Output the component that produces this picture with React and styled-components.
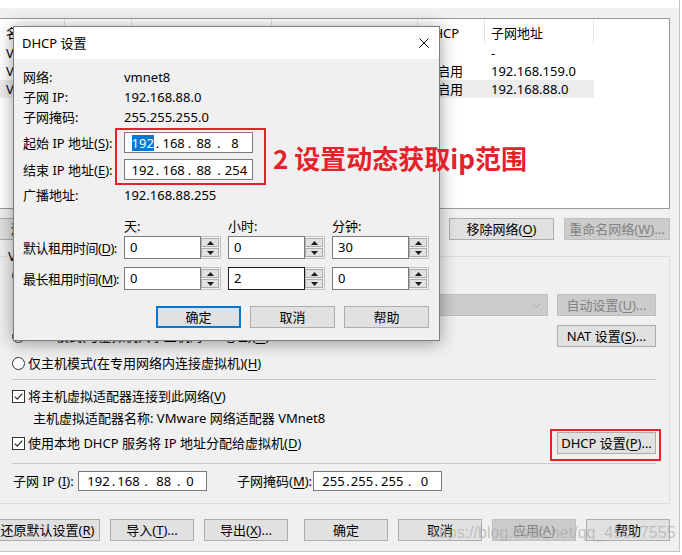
import React from "react";
import styled, { createGlobalStyle } from "styled-components";

const GlobalStyle = createGlobalStyle`
  html, body { margin: 0; padding: 0; background: #ffffff; }
  body {
    font-family: "Noto Sans", "Noto Sans CJK SC", sans-serif;
    font-size: 13px;
    color: #000;
    overflow: hidden;
  }
  u { text-underline-offset: 2px; }
`;

const Page = styled.div`
  position: relative;
  width: 682px;
  height: 555px;
  overflow: hidden;
  background: #ffffff;
`;

const Window = styled.div`
  margin-left: -3px;
  width: 683px;
  height: 552px;
  box-sizing: border-box;
  background: #f0f0f0;
  border-right: 1px solid #c4c4c4;
  border-bottom: 1px solid #c4c4c4;
  padding: 0 9px 0 0;
  display: flex;
  flex-direction: column;
`;

const TopStrip = styled.div`
  height: 8px;
  margin-right: -9px;
  background: #ffffff;
  flex: none;
`;

const List = styled.div`
  margin-top: 10px;
  height: 191px;
  box-sizing: border-box;
  border: 1px solid #9a9a9a;
  background: #ffffff;
  padding-left: 2px;
  flex: none;
  overflow: hidden;
`;

const cols = "65px 67px 140px 146px 67px 109px";

const ListHeader = styled.div`
  display: grid;
  grid-template-columns: ${cols};
  width: max-content;
  height: 25px;
`;

const HeaderCell = styled.div`
  display: flex;
  align-items: center;
  padding: 2px 0 0 6px;
  border-right: 1px solid #e5e5e5;
  white-space: nowrap;
  overflow: hidden;
`;

const ListRow = styled.div`
  display: grid;
  grid-template-columns: ${cols};
  width: max-content;
  height: 18px;
  background: ${(p) => (p.$sel ? "#ececec" : "transparent")};
`;

const Cell = styled.div`
  padding-left: 6px;
  line-height: 18px;
  white-space: nowrap;
  overflow: hidden;
`;

const Btn = styled.button`
  box-sizing: border-box;
  width: ${(p) => p.$w || 84}px;
  height: 22px;
  margin: 0;
  padding: 0;
  font: inherit;
  font-size: 13px;
  line-height: 18px;
  color: ${(p) => (p.$disabled ? "#838383" : "#000")};
  background: ${(p) => (p.$disabled ? "#cccccc" : "#e1e1e1")};
  border: ${(p) =>
    p.$focus ? "2px solid #0078d7" : p.$disabled ? "1px solid #bfbfbf" : "1px solid #adadad"};
  display: flex;
  align-items: center;
  justify-content: center;
  flex: none;
  white-space: nowrap;
`;

const NetButtons = styled.div`
  margin-top: 9px;
  height: 22px;
  display: flex;
  justify-content: space-between;
  flex: none;
`;

const BtnGroup = styled.div`
  display: flex;
  gap: ${(p) => p.$gap || 10}px;
`;

const Group = styled.div`
  position: relative;
  margin-top: 16px;
  border: 1px solid #dcdcdc;
  padding: 9px 13px 12px 14px;
  display: flex;
  flex-direction: column;
  flex: none;
`;

const GroupLabel = styled.span`
  position: absolute;
  top: -10px;
  left: 9px;
  padding: 0 1px;
  background: #f0f0f0;
  line-height: 18px;
  white-space: nowrap;
`;

const Row = styled.div`
  display: flex;
  align-items: center;
  justify-content: space-between;
  height: ${(p) => p.$h}px;
  margin-top: ${(p) => p.$mt || 0}px;
  flex: none;
`;

const Opt = styled.div`
  display: flex;
  align-items: center;
  gap: 3px;
  white-space: nowrap;
  line-height: 18px;
  padding-left: ${(p) => p.$indent || 0}px;
`;

const RadioDot = styled.span`
  width: 13px;
  height: 13px;
  box-sizing: border-box;
  border-radius: 50%;
  border: 1px solid #333;
  background: #fff;
  display: flex;
  align-items: center;
  justify-content: center;
  flex: none;
  &::after {
    content: "";
    display: ${(p) => (p.$on ? "block" : "none")};
    width: 5px;
    height: 5px;
    border-radius: 50%;
    background: #333;
  }
`;

const CheckBox = styled.span`
  width: 13px;
  height: 13px;
  box-sizing: border-box;
  border: 1px solid #333;
  background: #fff;
  display: flex;
  flex: none;
`;

const BridgeLeft = styled.div`
  flex: 1;
  display: flex;
  align-items: center;
  gap: 8px;
  margin-right: 9px;
  padding-left: 17px;
  white-space: nowrap;
  color: #838383;
`;

const Combo = styled.div`
  flex: 1;
  height: 22px;
  box-sizing: border-box;
  background: #cccccc;
  border: 1px solid #bfbfbf;
  display: flex;
  align-items: center;
  justify-content: flex-end;
  padding-right: 6px;
`;

const Separator = styled.div`
  height: 1px;
  margin-top: ${(p) => p.$mt}px;
  background: #c9c9c9;
  flex: none;
`;

const SubnetRow = styled.div`
  display: flex;
  align-items: center;
  height: 20px;
  margin-top: 7px;
  padding-left: 1px;
`;

const FieldLabel = styled.span`
  width: ${(p) => p.$w}px;
  margin-left: ${(p) => p.$ml || 0}px;
  white-space: nowrap;
  line-height: 18px;
  flex: none;
`;

const IpBox = styled.div`
  width: 129px;
  height: ${(p) => p.$h || 20}px;
  box-sizing: border-box;
  border: 1px solid #7a7a7a;
  background: #fff;
  display: flex;
  align-items: center;
  flex: none;
`;

const IpSeg = styled.span`
  display: inline-flex;
  justify-content: center;
  width: ${(p) => p.$w}px;
  flex: none;
  white-space: nowrap;
  line-height: 16px;
`;

const Sel = styled.span`
  background: #0078d7;
  color: #fff;
`;

const BottomBar = styled.div`
  margin-top: 15px;
  height: 22px;
  display: flex;
  justify-content: flex-end;
  gap: 10px;
  flex: none;
`;

const BarSpacer = styled.span`
  width: 6px;
  flex: none;
  margin-left: -10px;
`;

/* ---------- dialog ---------- */

const Dialog = styled.div`
  position: absolute;
  left: 13px;
  top: 26px;
  width: 427px;
  height: 315px;
  box-sizing: border-box;
  border: 1px solid #7d7d7d;
  background: #f0f0f0;
  box-shadow: 0 2px 16px rgba(0, 0, 0, 0.38);
  display: flex;
  flex-direction: column;
`;

const TitleBar = styled.div`
  height: 32px;
  background: #ffffff;
  display: flex;
  align-items: center;
  justify-content: space-between;
  padding: 0 10px 0 8px;
  flex: none;
`;

const TitleText = styled.span`
  line-height: 32px;
  white-space: nowrap;
`;

const DialogBody = styled.div`
  padding: 8px 10px 12px 9px;
  display: flex;
  flex-direction: column;
`;

const InfoRow = styled.div`
  display: grid;
  grid-template-columns: 101px 1fr;
  align-items: center;
  height: ${(p) => p.$h}px;
  margin-top: ${(p) => p.$mt || 0}px;
  white-space: nowrap;
  line-height: 18px;
`;

const TimeGrid = styled.div`
  display: grid;
  grid-template-columns: 94px 97px 97px 97px;
  column-gap: 7px;
  align-items: center;
  height: ${(p) => p.$h}px;
  margin-top: ${(p) => p.$mt || 0}px;
  white-space: nowrap;
  line-height: 18px;
`;

const TimeLabel = styled.span`
  letter-spacing: -0.5px;
  white-space: nowrap;
`;

const Spinner = styled.div`
  display: flex;
  height: 23px;
`;

const SpinInput = styled.div`
  flex: 1;
  box-sizing: border-box;
  border: 1px solid ${(p) => (p.$dark ? "#1e1e1e" : "#7a7a7a")};
  background: #fff;
  padding-left: 5px;
  line-height: 20px;
`;

const SpinCol = styled.div`
  width: 20px;
  box-sizing: border-box;
  border: 1px solid #c2c2c2;
  border-left: none;
  background: #f0f0f0;
  display: flex;
  flex-direction: column;
  padding: 1px 1px 1px 0;
  gap: 1px;
`;

const SpinBtn = styled.div`
  flex: 1;
  box-sizing: border-box;
  border: 1px solid #adadad;
  background: #e1e1e1;
  display: flex;
  align-items: center;
  justify-content: center;
`;

const DialogButtons = styled.div`
  display: flex;
  justify-content: flex-end;
  gap: 9px;
  margin-top: 16px;
  height: 22px;
`;

/* ---------- annotations ---------- */

const RedBox = styled.div`
  position: absolute;
  left: ${(p) => p.$l}px;
  top: ${(p) => p.$t}px;
  width: ${(p) => p.$w}px;
  height: ${(p) => p.$h}px;
  box-sizing: border-box;
  border: 2px solid #e5212a;
  pointer-events: none;
`;

const RedNote = styled.div`
  position: absolute;
  left: 273px;
  top: 142px;
  font-family: "Noto Sans CJK SC", sans-serif;
  font-size: 26px;
  font-weight: 700;
  line-height: 32px;
  color: #e5212a;
  white-space: nowrap;
`;

const Watermark = styled.div`
  position: absolute;
  left: 430px;
  top: 523px;
  font-family: "Liberation Sans", Arial, sans-serif;
  font-size: 16px;
  line-height: 20px;
  color: rgba(165, 165, 165, 0.6);
  white-space: nowrap;
  pointer-events: none;
`;

/* ---------- helpers ---------- */

function IpText({ parts, selectFirst }) {
  const centers = parts.map((p) => p[1]);
  const n = centers.length;
  const mids = centers.slice(1).map((c, i) => (centers[i] + c) / 2);
  const first = centers[0] - (mids[0] - centers[0]);
  const bounds = [first, ...mids, centers[n - 1] + (centers[n - 1] - mids[n - 2])];
  return (
    <>
      <IpSeg $w={first} />
      {parts.map(([t], i) => (
        <IpSeg key={i} $w={bounds[i + 1] - bounds[i]}>
          {i === 0 && selectFirst ? <Sel>{t}</Sel> : t}
        </IpSeg>
      ))}
    </>
  );
}

const Check = () => (
  <CheckBox>
    <svg width="11" height="11" viewBox="0 0 11 11">
      <polyline points="1.8,5.6 4.3,8.1 9.3,2.6" fill="none" stroke="#333" strokeWidth="1.3" />
    </svg>
  </CheckBox>
);

const Arrow = ({ down }) => (
  <svg width="7" height="4" viewBox="0 0 7 4">
    <polygon points={down ? "0,0 7,0 3.5,4" : "3.5,0 7,4 0,4"} fill="#1a1a1a" />
  </svg>
);

const Spin = ({ value, dark }) => (
  <Spinner>
    <SpinInput $dark={dark}>{value}</SpinInput>
    <SpinCol>
      <SpinBtn>
        <Arrow />
      </SpinBtn>
      <SpinBtn>
        <Arrow down />
      </SpinBtn>
    </SpinCol>
  </Spinner>
);

const header = ["名称", "类型", "外部连接", "主机连接", "DHCP", "子网地址"];
const rows = [
  ["VMnet0", "桥接模式", "自动桥接", "-", "-", "-"],
  ["VMnet1", "仅主机...", "-", "已连接", "已启用", "192.168.159.0"],
  ["VMnet8", "NAT 模式", "NAT 模式", "已连接", "已启用", "192.168.88.0"],
];

export default function App() {
  return (
    <Page>
      <GlobalStyle />
      <Window>
        <TopStrip />
        <List>
          <ListHeader>
            {header.map((h) => (
              <HeaderCell key={h}>{h}</HeaderCell>
            ))}
          </ListHeader>
          {rows.map((r, i) => (
            <ListRow key={i} $sel={i === 2}>
              {r.map((c, j) => (
                <Cell key={j}>{c}</Cell>
              ))}
            </ListRow>
          ))}
        </List>

        <NetButtons>
          <Btn $w={105}>
            <span>添加网络(<u>E</u>)...</span>
          </Btn>
          <BtnGroup>
            <Btn $w={105}>
              <span>移除网络(<u>O</u>)</span>
            </Btn>
            <Btn $w={106} $disabled>
              <span>重命名网络(<u>W</u>)...</span>
            </Btn>
          </BtnGroup>
        </NetButtons>

        <Group>
          <GroupLabel>VMnet 信息</GroupLabel>
          <Row $h={18}>
            <Opt>
              <RadioDot />
              <span>桥接模式(将虚拟机直接连接到外部网络)(<u>B</u>)</span>
            </Opt>
          </Row>
          <Row $h={22} $mt={10}>
            <BridgeLeft>
              <span>已桥接至(<u>G</u>):</span>
              <Combo>
                <svg width="9" height="5" viewBox="0 0 9 5">
                  <polyline points="0.5,0.5 4.5,4.5 8.5,0.5" fill="none" stroke="#a8a8a8" />
                </svg>
              </Combo>
            </BridgeLeft>
            <Btn $w={99} $disabled>
              <span>自动设置(<u>U</u>)...</span>
            </Btn>
          </Row>
          <Row $h={22} $mt={9}>
            <Opt>
              <RadioDot $on />
              <span>NAT 模式(与虚拟机共享主机的 IP 地址)(<u>N</u>)</span>
            </Opt>
            <Btn $w={99}>
              <span>NAT 设置(<u>S</u>)...</span>
            </Btn>
          </Row>
          <Row $h={18} $mt={7}>
            <Opt>
              <RadioDot />
              <span>仅主机模式(在专用网络内连接虚拟机)(<u>H</u>)</span>
            </Opt>
          </Row>
          <Separator $mt={7} />
          <Row $h={18} $mt={7}>
            <Opt>
              <Check />
              <span>将主机虚拟适配器连接到此网络(<u>V</u>)</span>
            </Opt>
          </Row>
          <Row $h={18} $mt={4}>
            <Opt $indent={21}>
              <span>主机虚拟适配器名称: VMware 网络适配器 VMnet8</span>
            </Opt>
          </Row>
          <Row $h={22} $mt={5}>
            <Opt>
              <Check />
              <span>使用本地 DHCP 服务将 IP 地址分配给虚拟机(<u>D</u>)</span>
            </Opt>
            <Btn $w={99}>
              <span>DHCP 设置(<u>P</u>)...</span>
            </Btn>
          </Row>
          <Separator $mt={9} />
          <SubnetRow>
            <FieldLabel $w={65}>
              子网 IP (<u>I</u>):
            </FieldLabel>
            <IpBox>
              <IpText
                parts={[
                  ["192", 19.5],
                  [".", 35],
                  ["168", 48],
                  [".", 67],
                  ["88", 85.5],
                  [".", 101],
                  ["0", 111],
                ]}
              />
            </IpBox>
            <FieldLabel $w={76} $ml={30}>
              子网掩码(<u>M</u>):
            </FieldLabel>
            <IpBox>
              <IpText
                parts={[
                  ["255", 19.5],
                  [".", 34],
                  ["255", 48],
                  [".", 62],
                  ["255", 76.5],
                  [".", 98],
                  ["0", 110.5],
                ]}
              />
            </IpBox>
          </SubnetRow>
        </Group>

        <BottomBar>
          <Btn $w={105}>
            <span>还原默认设置(<u>R</u>)</span>
          </Btn>
          <Btn>
            <span>导入(<u>T</u>)...</span>
          </Btn>
          <Btn>
            <span>导出(<u>X</u>)...</span>
          </Btn>
          <BarSpacer />
          <Btn>确定</Btn>
          <Btn>取消</Btn>
          <Btn $disabled>
            <span>应用(<u>A</u>)</span>
          </Btn>
          <Btn>帮助</Btn>
        </BottomBar>
      </Window>

      <Dialog>
        <TitleBar>
          <TitleText>DHCP 设置</TitleText>
          <svg width="10" height="10" viewBox="0 0 10 10">
            <path d="M0.5 0.5 L9.5 9.5 M9.5 0.5 L0.5 9.5" stroke="#111" strokeWidth="1" />
          </svg>
        </TitleBar>
        <DialogBody>
          <InfoRow $h={20}>
            <span>网络:</span>
            <span>vmnet8</span>
          </InfoRow>
          <InfoRow $h={20}>
            <span>子网 IP:</span>
            <span>192.168.88.0</span>
          </InfoRow>
          <InfoRow $h={20}>
            <span>子网掩码:</span>
            <span>255.255.255.0</span>
          </InfoRow>
          <InfoRow $h={21} $mt={5}>
            <span>
              起始 IP 地址(<u>S</u>):
            </span>
            <IpBox $h={21}>
              <IpText
                selectFirst
                parts={[
                  ["192", 17.7],
                  [".", 31.7],
                  ["168", 49],
                  [".", 65],
                  ["88", 78.7],
                  [".", 93],
                  ["8", 110],
                ]}
              />
            </IpBox>
          </InfoRow>
          <InfoRow $h={21} $mt={6}>
            <span>
              结束 IP 地址(<u>E</u>):
            </span>
            <IpBox $h={21}>
              <IpText
                parts={[
                  ["192", 17.7],
                  [".", 31.7],
                  ["168", 49],
                  [".", 65],
                  ["88", 78.7],
                  [".", 93],
                  ["254", 111],
                ]}
              />
            </IpBox>
          </InfoRow>
          <InfoRow $h={20} $mt={5}>
            <span>广播地址:</span>
            <span>192.168.88.255</span>
          </InfoRow>
          <TimeGrid $h={18} $mt={12}>
            <span />
            <span>天:</span>
            <span>小时:</span>
            <span>分钟:</span>
          </TimeGrid>
          <TimeGrid $h={23} $mt={1}>
            <TimeLabel>
              默认租用时间(<u>D</u>):
            </TimeLabel>
            <Spin value="0" />
            <Spin value="0" />
            <Spin value="30" />
          </TimeGrid>
          <TimeGrid $h={23} $mt={8}>
            <TimeLabel>
              最长租用时间(<u>M</u>):
            </TimeLabel>
            <Spin value="0" />
            <Spin value="2" dark />
            <Spin value="0" />
          </TimeGrid>
          <DialogButtons>
            <Btn $w={85} $focus>
              确定
            </Btn>
            <Btn $w={85}>取消</Btn>
            <Btn $w={85}>帮助</Btn>
          </DialogButtons>
        </DialogBody>
      </Dialog>

      <RedBox $l={115} $t={128} $w={151} $h={57} />
      <RedNote>2 设置动态获取ip范围</RedNote>
      <RedBox $l={550} $t={429} $w={111} $h={32} />
      <Watermark>https://blog.csdn.net/qq_45017555</Watermark>
    </Page>
  );
}
